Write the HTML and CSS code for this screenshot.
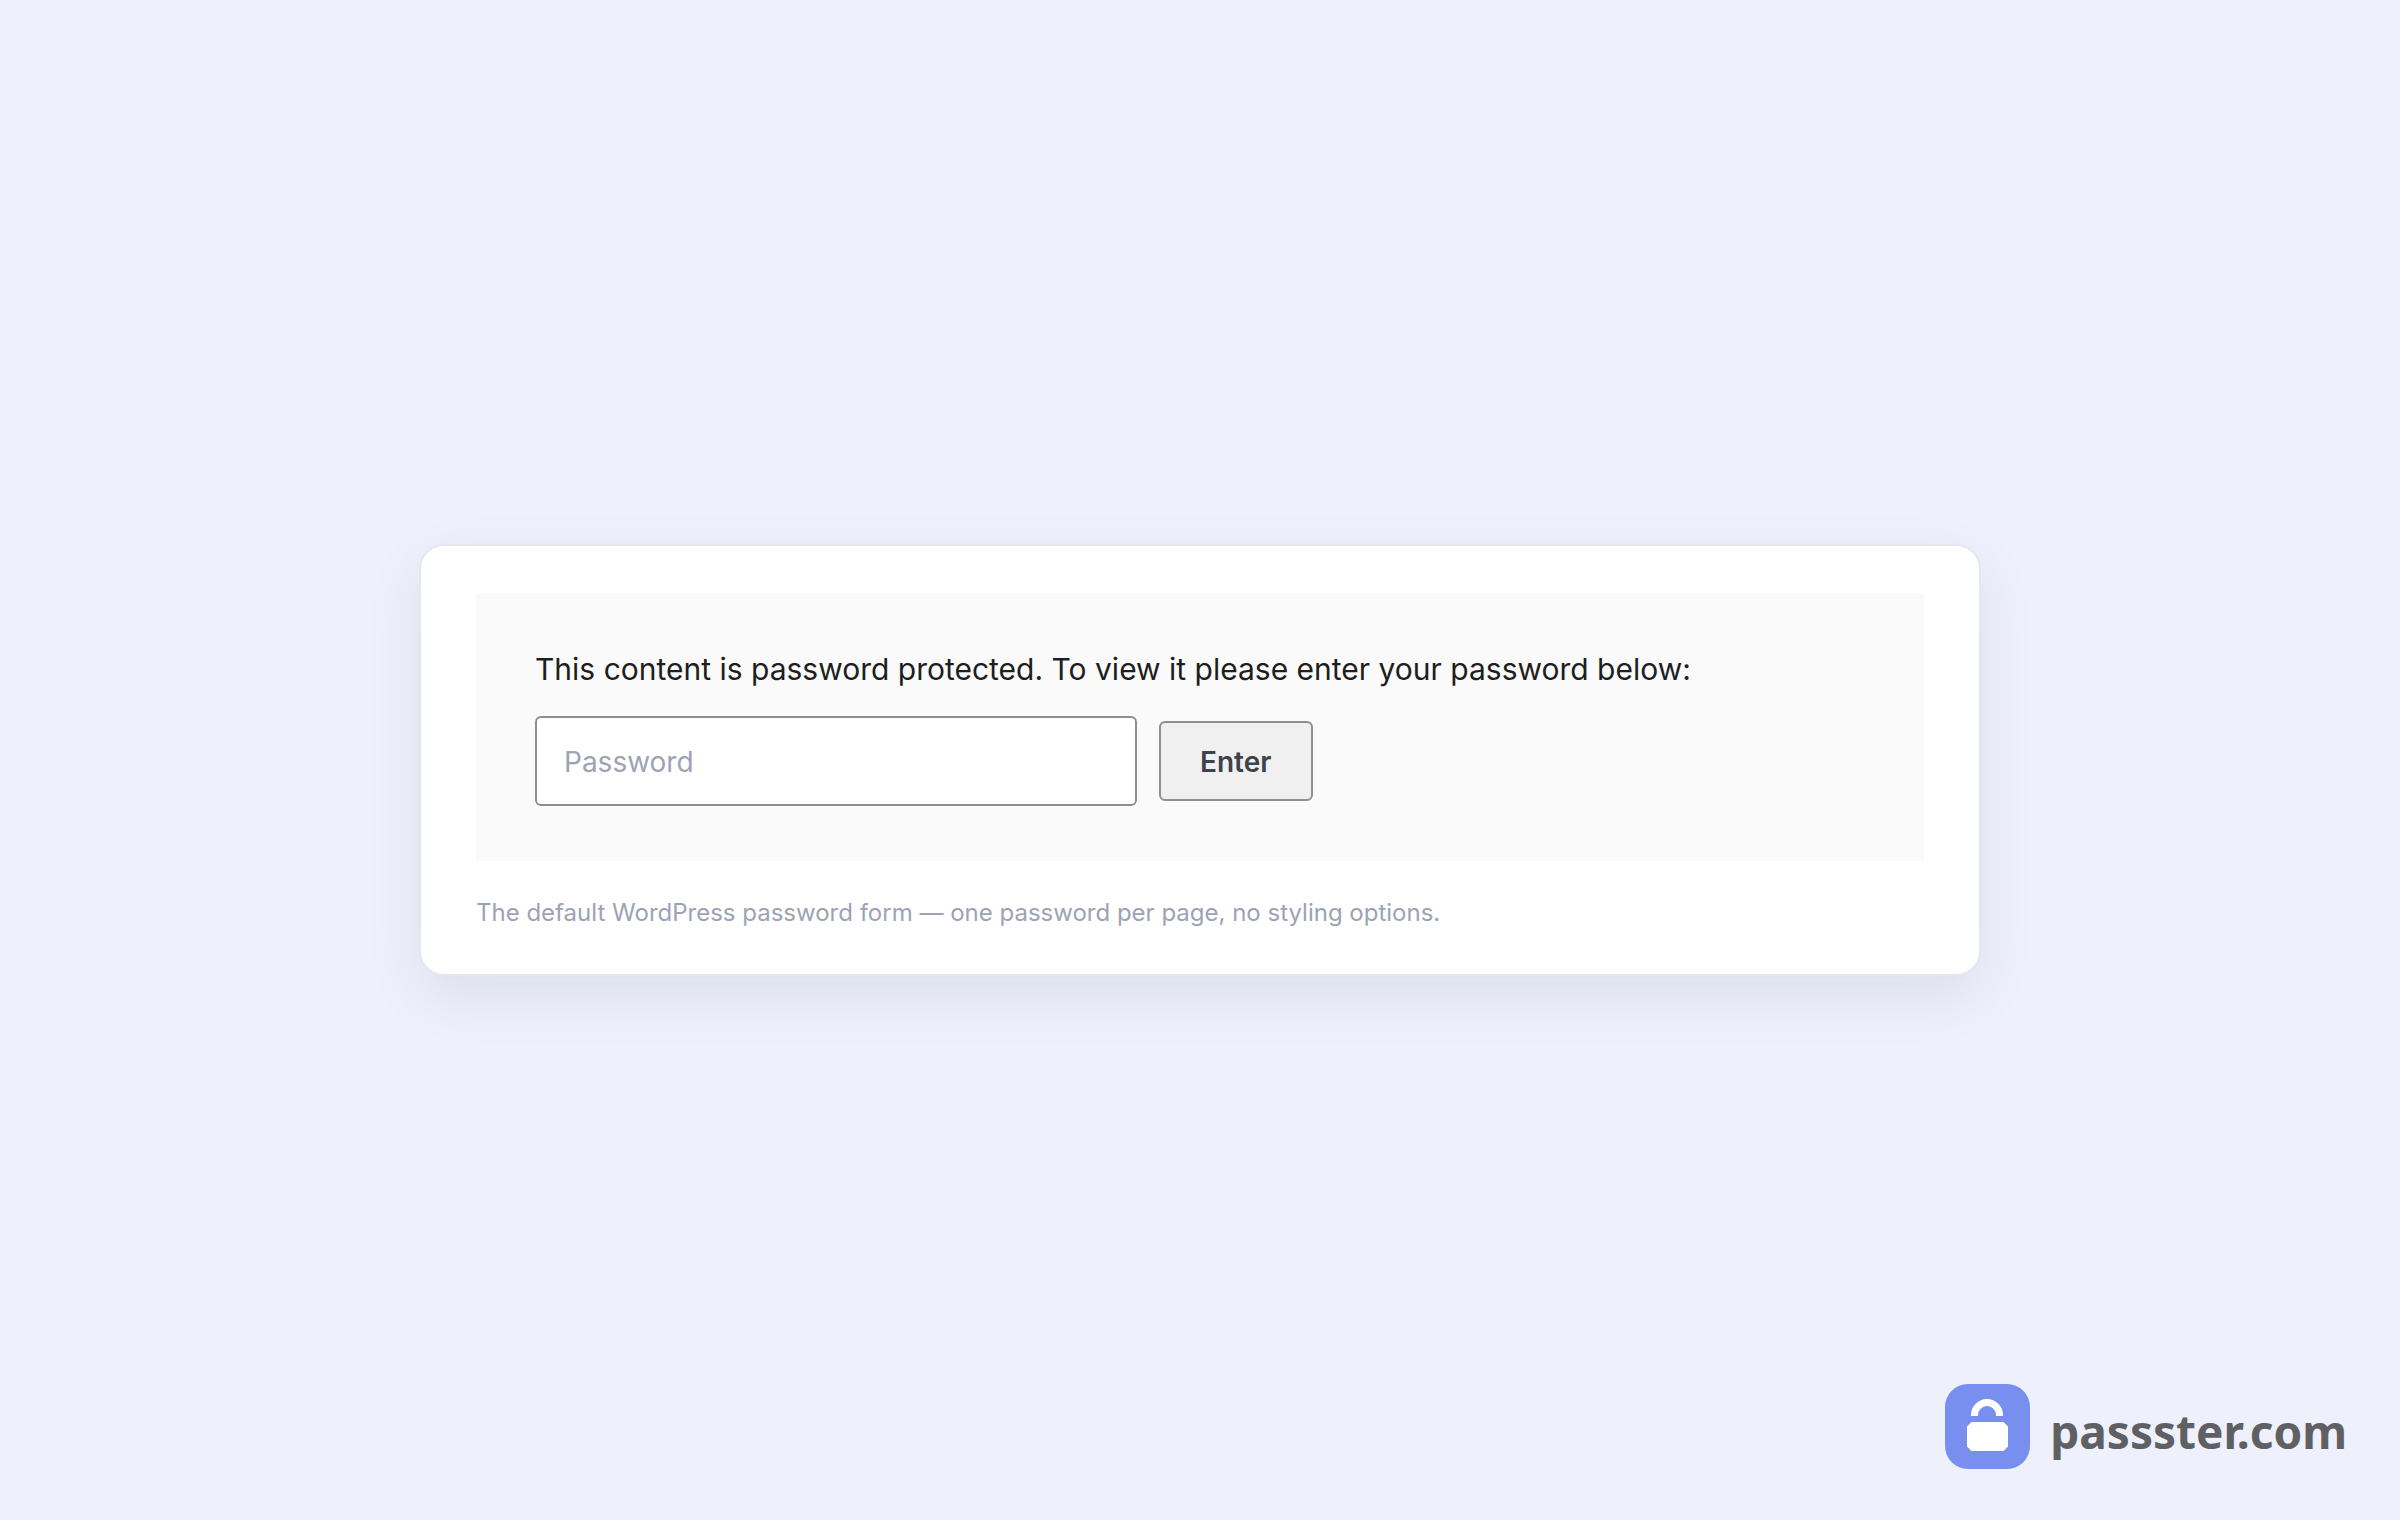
FILE: index.html
```html
<!DOCTYPE html>
<html lang="en">

<head>
    <meta charset="UTF-8">
    <meta name="viewport" content="width=device-width, initial-scale=1.0">
    <title>Protected content</title>
    <link rel="stylesheet" href="styles.css">
</head>

<body>
    <main class="card">
        <form class="password-form">
            <label class="form-message" for="password">This content is password protected. To view it please enter your password below:</label>
            <div class="form-row">
                <input type="password" id="password" class="password-input" placeholder="Password">
                <button type="submit" class="submit-btn">Enter</button>
            </div>
        </form>
        <p class="caption">The default WordPress password form — one password per page, no styling options.</p>
    </main>

    <a class="brand" href="#">
        <svg class="brand-icon" viewBox="0 0 85 85" aria-hidden="true">
            <rect width="85" height="85" rx="23" fill="#788ff0" />
            <path d="M29.5 32v-1a12.5 12.5 0 0 1 25 0v1" fill="none" stroke="#fff" stroke-width="7" />
            <path d="M26.5 38h32l4.500 4.500v20l-4.500 4.500h-32l-4.500-4.500v-20z" fill="#fff" />
        </svg>
        <span class="brand-name">passster.com</span>
    </a>
</body>

</html>
```

FILE: styles.css
```css
* {
    box-sizing: border-box;
}

body {
    margin: 0;
    min-height: 100vh;
    display: flex;
    align-items: center;
    justify-content: center;
    background: #eef0fc;
    color: #1e1e1e;
    font-family: Inter, sans-serif;
}

.card {
    width: 65%;
    padding: 47px 55px;
    background: #fff;
    border: 1px solid #e5e7ef;
    border-radius: 24px;
    box-shadow: 0 0 0 1px #e5e7ef, 0 20px 60px rgba(16, 24, 40, 0.08);
}

.password-form {
    padding: 55px 59px;
    background: #fafafa;
}

.form-message {
    display: block;
    margin-bottom: 26px;
    font-size: 30px;
    line-height: 42px;
}

.form-row {
    display: flex;
    align-items: center;
    gap: 22px;
}

.password-input {
    width: 602px;
    padding: 29px 27px 27px;
    border: 2px solid #8c8f94;
    border-radius: 6px;
    background: #fff;
    font: 28px/30px Inter, sans-serif;
}

.password-input::placeholder {
    color: #9ca3b4;
}

.submit-btn {
    padding: 22px 40px 20px 39px;
    border: 2px solid #8c8f94;
    border-radius: 6px;
    background: #f0f0f0;
    color: #3c434a;
    font: 600 28px/34px Inter, sans-serif;
}

.caption {
    margin: 38px 0 0;
    color: #9ca3b4;
    font-size: 24px;
    line-height: 28px;
}

.brand {
    position: absolute;
    right: 53px;
    bottom: 51px;
    display: flex;
    align-items: flex-end;
    gap: 20px;
    color: #5f6064;
    text-decoration: none;
}

.brand-icon {
    width: 85px;
    height: 85px;
}

.brand-name {
    font: 700 46px/76px "Noto Sans", sans-serif;
}
```
